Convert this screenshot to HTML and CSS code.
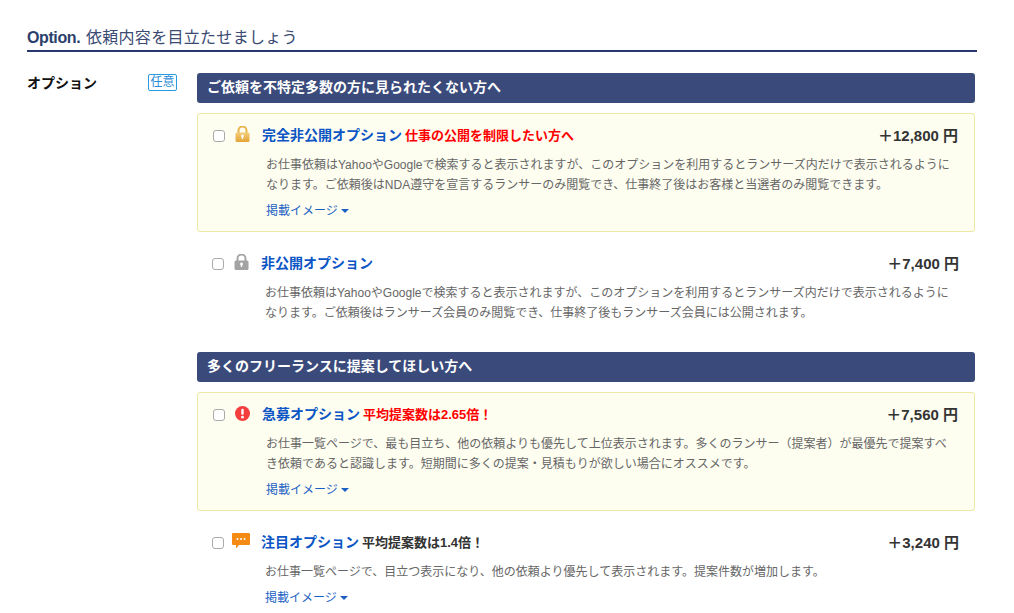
FILE: index.html
```html
<!DOCTYPE html>
<html lang="ja">
<head>
<meta charset="utf-8">
<title>Option</title>
<link rel="stylesheet" href="styles.css">
</head>
<body>
<svg class="defs" width="0" height="0"><defs><linearGradient id="gold" x1="0" y1="0" x2="0" y2="1"><stop offset="0" stop-color="#f3cd78"/><stop offset="1" stop-color="#e5a436"/></linearGradient></defs></svg>
<div class="page">
  <h2 class="section-title"><b>Option.</b> 依頼内容を目立たせましょう</h2>
  <div class="form-row">
    <div class="side">
      <span class="side-label">オプション</span>
      <span class="badge">任意</span>
    </div>
    <div class="main">
      <h3 class="banner">ご依頼を不特定多数の方に見られたくない方へ</h3>
      <div class="option featured">
        <div class="head">
          <input type="checkbox" class="check">
          <svg class="icon lock" viewBox="0 0 15 16" width="15" height="16"><path d="M3.500 8V4.500a4 4 0 0 1 8 0V8" fill="none" stroke="#e9b44c" stroke-width="2"/><rect x="0.500" y="6.500" width="14" height="9.500" rx="1.500" fill="url(#gold)"/><circle cx="7.500" cy="10" r="1.400" fill="#fff"/><rect x="6.800" y="10" width="1.400" height="3" fill="#fff"/></svg>
          <span class="name">完全非公開オプション</span>
          <span class="note red">仕事の公開を制限したい方へ</span>
          <span class="price">＋12,800 円</span>
        </div>
        <p class="desc">お仕事依頼はYahooやGoogleで検索すると表示されますが、このオプションを利用するとランサーズ内だけで表示されるようになります。ご依頼後はNDA遵守を宣言するランサーのみ閲覧でき、仕事終了後はお客様と当選者のみ閲覧できます。</p>
        <a class="more">掲載イメージ<i class="caret"></i></a>
      </div>
      <div class="option plain no-link">
        <div class="head">
          <input type="checkbox" class="check">
          <svg class="icon lock" viewBox="0 0 15 16" width="15" height="16"><path d="M3.500 8V4.500a4 4 0 0 1 8 0V8" fill="none" stroke="#a6a6a6" stroke-width="2"/><rect x="0.500" y="6.500" width="14" height="9.500" rx="1.500" fill="#a3a3a3"/><circle cx="7.500" cy="10" r="1.400" fill="#fff"/><rect x="6.800" y="10" width="1.400" height="3" fill="#fff"/></svg>
          <span class="name">非公開オプション</span>
          <span class="price">＋7,400 円</span>
        </div>
        <p class="desc">お仕事依頼はYahooやGoogleで検索すると表示されますが、このオプションを利用するとランサーズ内だけで表示されるようになります。ご依頼後はランサーズ会員のみ閲覧でき、仕事終了後もランサーズ会員には公開されます。</p>
      </div>
      <h3 class="banner">多くのフリーランスに提案してほしい方へ</h3>
      <div class="option featured">
        <div class="head">
          <input type="checkbox" class="check">
          <svg class="icon lock" viewBox="0 0 15 15" width="15" height="15"><circle cx="7.500" cy="7.500" r="7.500" fill="#f43d3d"/><rect x="6.300" y="2.800" width="2.400" height="6" rx="1" fill="#fff"/><circle cx="7.500" cy="11.200" r="1.400" fill="#fff"/></svg>
          <span class="name">急募オプション</span>
          <span class="note red">平均提案数は2.65倍！</span>
          <span class="price">＋7,560 円</span>
        </div>
        <p class="desc">お仕事一覧ページで、最も目立ち、他の依頼よりも優先して上位表示されます。多くのランサー（提案者）が最優先で提案すべき依頼であると認識します。短期間に多くの提案・見積もりが欲しい場合にオススメです。</p>
        <a class="more">掲載イメージ<i class="caret"></i></a>
      </div>
      <div class="option plain">
        <div class="head">
          <input type="checkbox" class="check">
          <svg class="icon chat" viewBox="0 0 18 16" width="18" height="16"><path d="M1 0h16a1 1 0 0 1 1 1v10a1 1 0 0 1-1 1H7l-3 3.500V12H1a1 1 0 0 1-1-1V1a1 1 0 0 1 1-1z" fill="#f58a14"/><circle cx="5.500" cy="6" r="1" fill="#fff"/><circle cx="9" cy="6" r="1" fill="#fff"/><circle cx="12.500" cy="6" r="1" fill="#fff"/></svg>
          <span class="name">注目オプション</span>
          <span class="note">平均提案数は1.4倍！</span>
          <span class="price">＋3,240 円</span>
        </div>
        <p class="desc">お仕事一覧ページで、目立つ表示になり、他の依頼より優先して表示されます。提案件数が増加します。</p>
        <a class="more">掲載イメージ<i class="caret"></i></a>
      </div>
    </div>
  </div>
</div>
</body>
</html>
```
FILE: styles.css
```css
* { box-sizing: border-box; }
html, body { margin: 0; padding: 0; background: #fff; height: 613px; overflow: hidden; }
body { font-family: "Liberation Sans", "Noto Sans CJK JP", sans-serif; color: #333; }
.defs { display: block; height: 0; }
.page { width: 950px; margin-left: 27px; padding-top: 26px; }
.section-title {
  margin: 0; height: 26px; border-bottom: 2px solid #27396f;
  font-size: 16px; line-height: 24px; font-weight: normal; color: #3a4a73; letter-spacing: 0.3px;
}
.section-title b { color: #2b3f6c; letter-spacing: -0.4px; margin-right: 1px; }
.form-row { display: flex; margin-top: 21px; }
.side { width: 170px; display: flex; justify-content: space-between; align-items: flex-start; padding-right: 20px; }
.side-label { font-size: 14px; font-weight: bold; color: #111; line-height: 20px; }
.badge {
  width: 29px; height: 17px; margin-top: 1px; border: 1px solid #2a9adf; border-radius: 2px;
  color: #2a8ad6; font-size: 12px; line-height: 15px; text-align: center;
}
.main { width: 778px; }
.banner {
  margin: 0; height: 30px; padding-left: 10px; background: #3a4a7b; border-radius: 3px;
  color: #fff; font-size: 14px; line-height: 29px; font-weight: bold;
}
.featured {
  margin-top: 10px; height: 119px; padding: 10px 16px 0 15px;
  background: #fdfdf0; border: 1px solid #eee8a8; border-radius: 3px;
}
.plain { padding: 20px 16px 0 15px; }
.plain.no-link { height: 120px; }
.head { display: flex; align-items: center; height: 20px; }
.check {
  appearance: none; -webkit-appearance: none; margin: 4px 10px 0 0; width: 12px; height: 12px;
  background: #fff; border: 1px solid #aaa; border-radius: 3px; flex: none;
}
.icon { flex: none; }
.lock { margin-right: 12px; }
.chat { margin: 0 11px 0 -2px; }
.name { font-size: 14px; font-weight: bold; color: #0b55c4; }
.note { margin-left: 3px; font-size: 13px; font-weight: bold; color: #333; }
.note.red { color: #f00; }
.price { margin-left: auto; font-size: 15px; font-weight: bold; color: #333; }
.desc { margin: 11px 0 0 53px; width: 690px; font-size: 12px; line-height: 20px; color: #666; }
.more { display: block; margin: 7px 0 0 53px; font-size: 12px; line-height: 18px; color: #1a5fc4; }
.caret {
  display: inline-block; margin-left: 3px; vertical-align: 2px;
  border-top: 4px solid #1a5fc4; border-left: 4px solid transparent; border-right: 4px solid transparent;
}
```
